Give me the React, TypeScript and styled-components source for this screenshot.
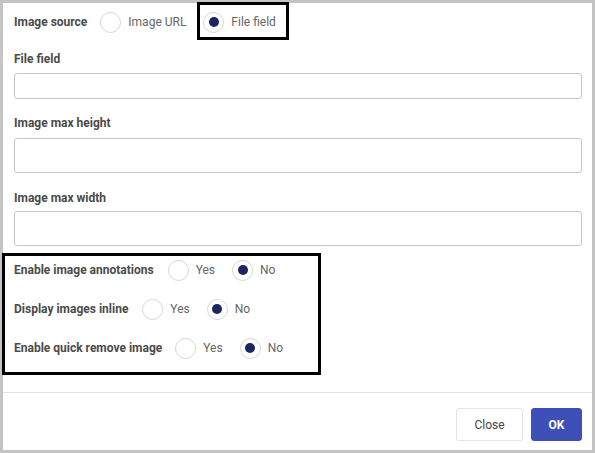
import styled, { createGlobalStyle } from "styled-components";

const GlobalStyle = createGlobalStyle`
  html, body {
    margin: 0;
    padding: 0;
    background: #ffffff;
  }
  * {
    box-sizing: border-box;
  }
`;

const Modal = styled.div`
  width: 595px;
  height: 453px;
  border: 3px solid #c4c4c4;
  background: #ffffff;
  display: flex;
  flex-direction: column;
  font-family: Roboto, "Liberation Sans", Arial, sans-serif;
`;

const Body = styled.div`
  flex: 1;
  padding: 9px 10px 0 11px;
  display: flex;
  flex-direction: column;
`;

const SourceRow = styled.div`
  display: flex;
  align-items: center;
  height: 20px;
`;

const Label = styled.span`
  font-size: 12px;
  font-weight: 700;
  color: #4a4a4a;
  line-height: 16px;
  white-space: nowrap;
`;

const FieldLabel = styled(Label)<{ $top: number }>`
  display: block;
  margin-top: ${(p) => p.$top}px;
`;

const Input = styled.input<{ $height: number; $top: number }>`
  display: block;
  width: 100%;
  height: ${(p) => p.$height}px;
  margin-top: ${(p) => p.$top}px;
  border: 1px solid #c8c8c8;
  border-radius: 3px;
  background: #ffffff;
  outline: none;
`;

const Options = styled.div<{ $gap: number }>`
  display: flex;
  align-items: center;
  margin-left: ${(p) => p.$gap}px;
  gap: 17px;
`;

const Option = styled.label<{ $marked?: boolean }>`
  display: flex;
  align-items: center;
  gap: 7px;
  position: relative;
  font-size: 12px;
  color: #666666;
  cursor: pointer;

  ${(p) =>
    p.$marked &&
    `
    &::after {
      content: "";
      position: absolute;
      left: -6px;
      right: -13px;
      top: -10px;
      bottom: -7px;
      border: 3px solid #000000;
      pointer-events: none;
    }
  `}
`;

const Circle = styled.span<{ $checked?: boolean }>`
  width: 21px;
  height: 21px;
  border-radius: 50%;
  border: 1px solid #d6d6d6;
  display: flex;
  align-items: center;
  justify-content: center;
  flex-shrink: 0;

  &::before {
    content: "";
    width: 10px;
    height: 10px;
    border-radius: 50%;
    background: ${(p) => (p.$checked ? "#1c2562" : "transparent")};
  }
`;

const Group = styled.div`
  margin-top: 7px;
  margin-left: -12px;
  width: 319px;
  height: 122px;
  border: 3px solid #000000;
  padding: 1px 0 0 9px;
  display: flex;
  flex-direction: column;
  gap: 13px;
`;

const ToggleRow = styled.div`
  display: flex;
  align-items: center;
  height: 26px;
`;

const Footer = styled.div`
  border-top: 1px solid #e2e2e2;
  height: 58px;
  padding: 15px 10px 9px 0;
  display: flex;
  justify-content: flex-end;
  gap: 8px;
`;

const Button = styled.button<{ $primary?: boolean }>`
  height: 33px;
  padding: 0;
  width: ${(p) => (p.$primary ? 51 : 67)}px;
  border-radius: 3px;
  font-family: Roboto, "Liberation Sans", Arial, sans-serif;
  font-size: 12px;
  font-weight: ${(p) => (p.$primary ? 700 : 400)};
  color: ${(p) => (p.$primary ? "#ffffff" : "#444444")};
  background: ${(p) => (p.$primary ? "#3f4fb8" : "#ffffff")};
  border: 1px solid ${(p) => (p.$primary ? "#3f4fb8" : "#e3e3e3")};
  cursor: pointer;
`;

type RadioProps = { label: string; checked?: boolean; marked?: boolean };

const Radio = ({ label, checked, marked }: RadioProps) => (
  <Option $marked={marked}>
    <Circle $checked={checked} />
    {label}
  </Option>
);

const toggles = [
  { label: "Enable image annotations", gap: 14 },
  { label: "Display images inline", gap: 14 },
  { label: "Enable quick remove image", gap: 13 },
];

const App = () => {
  return (
    <>
      <GlobalStyle />
      <Modal>
        <Body>
          <SourceRow>
            <Label>Image source</Label>
            <Options $gap={13}>
              <Radio label="Image URL" />
              <Radio label="File field" checked marked />
            </Options>
          </SourceRow>

          <FieldLabel $top={19}>File field</FieldLabel>
          <Input $height={26} $top={6} />

          <FieldLabel $top={16}>Image max height</FieldLabel>
          <Input $height={35} $top={7} />

          <FieldLabel $top={17}>Image max width</FieldLabel>
          <Input $height={35} $top={5} />

          <Group>
            {toggles.map((t) => (
              <ToggleRow key={t.label}>
                <Label>{t.label}</Label>
                <Options $gap={t.gap}>
                  <Radio label="Yes" />
                  <Radio label="No" checked />
                </Options>
              </ToggleRow>
            ))}
          </Group>
        </Body>
        <Footer>
          <Button>Close</Button>
          <Button $primary>OK</Button>
        </Footer>
      </Modal>
    </>
  );
};

export default App;
